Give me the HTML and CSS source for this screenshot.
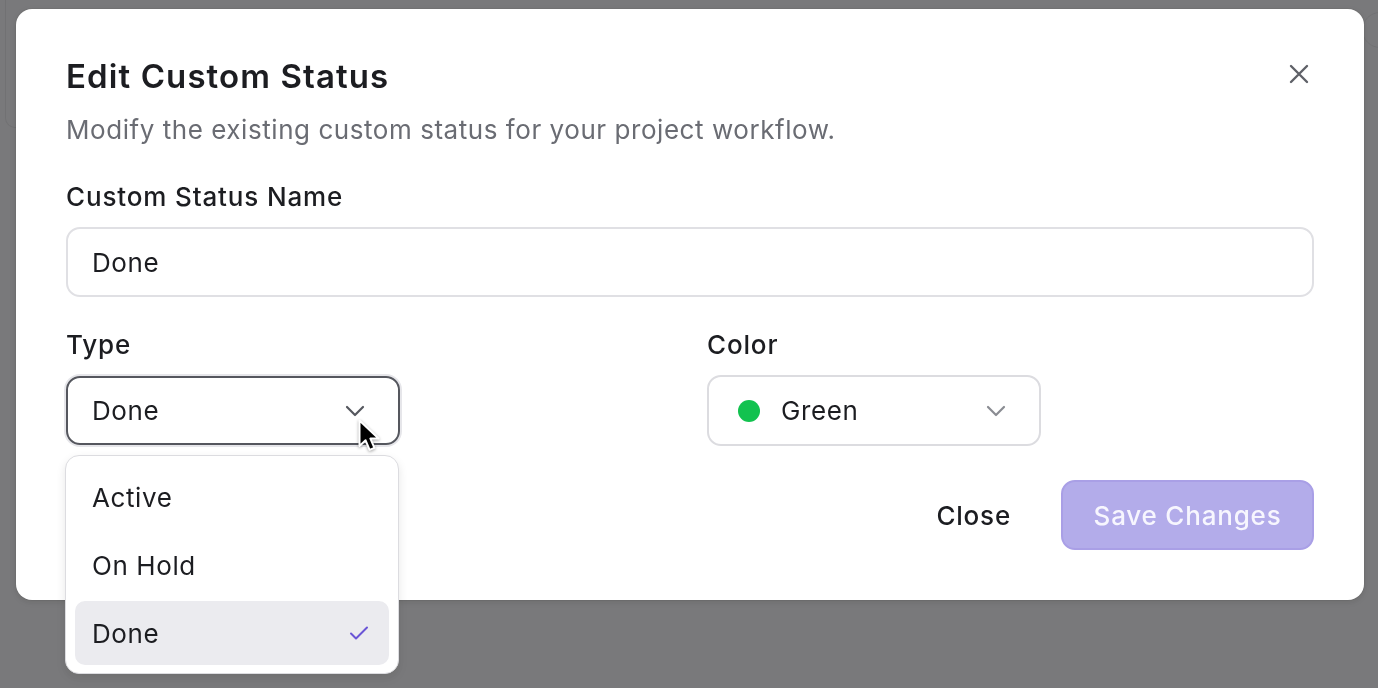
FILE: index.html
```html
<!DOCTYPE html>
<html lang="en">
<head>
<meta charset="utf-8">
<title>Edit Custom Status</title>
<link rel="stylesheet" href="styles.css">
</head>
<body>
  <div class="page">
    <div class="page-rail"></div>
    <div class="page-side"></div>
  </div>

  <div class="backdrop">
    <div class="dialog" role="dialog" aria-labelledby="dlg-title">
      <button class="dialog-close" aria-label="Close">
        <svg width="20" height="20" viewBox="0 0 20 20" fill="none" stroke="currentColor" stroke-width="2.4" stroke-linecap="round">
          <path d="M2 2 L18 18 M18 2 L2 18"/>
        </svg>
      </button>

      <h1 class="dialog-title" id="dlg-title">Edit Custom Status</h1>
      <p class="dialog-desc">Modify the existing custom status for your project workflow.</p>

      <div class="field">
        <label class="field-label">Custom Status Name</label>
        <div class="text-input">Done</div>
      </div>

      <div class="field-row">
        <div class="field">
          <label class="field-label">Type</label>
          <div class="select-wrap">
            <div class="select is-open">
              <span class="select-value">Done</span>
              <svg class="chevron" width="20" height="12" viewBox="0 0 20 12" fill="none" stroke="currentColor" stroke-width="2.2" stroke-linecap="round" stroke-linejoin="round">
                <path d="M2 2 L10 10 L18 2"/>
              </svg>
            </div>
            <ul class="menu">
              <li class="menu-item">Active</li>
              <li class="menu-item">On Hold</li>
              <li class="menu-item is-selected">Done
                <svg class="check" width="20" height="16" viewBox="0 0 20 16" fill="none" stroke="currentColor" stroke-width="2" stroke-linecap="round" stroke-linejoin="round">
                  <path d="M2 8.5 L7 13.5 L18 2.5"/>
                </svg>
              </li>
            </ul>
            <svg class="cursor" width="24" height="38" viewBox="0 0 24 38">
              <path d="M1.5 1.5 L1.5 27 L7.6 21.3 L11.6 30.8 L16.4 28.8 L12.4 19.6 L20.6 19.6 Z" fill="#000" stroke="#fff" stroke-width="2" stroke-linejoin="round"/>
            </svg>
          </div>
        </div>

        <div class="field">
          <label class="field-label">Color</label>
          <div class="select select-color">
            <span class="dot"></span>
            <span class="select-value">Green</span>
            <svg class="chevron chevron-light" width="20" height="12" viewBox="0 0 20 12" fill="none" stroke="currentColor" stroke-width="2.2" stroke-linecap="round" stroke-linejoin="round">
              <path d="M2 2 L10 10 L18 2"/>
            </svg>
          </div>
        </div>
      </div>

      <div class="dialog-footer">
        <button class="btn btn-ghost">Close</button>
        <button class="btn btn-primary" disabled>Save Changes</button>
      </div>
    </div>
  </div>
</body>
</html>
```

FILE: styles.css
```css
* {
  box-sizing: border-box;
}

html, body {
  margin: 0;
  height: 100%;
}

body {
  font-family: Inter, "Noto Sans", "Liberation Sans", sans-serif;
  color: #1c1d21;
  background: #f4f4f6;
  letter-spacing: 0.6px;
  overflow: hidden;
}

/* faint app chrome behind the modal */
.page {
  position: fixed;
  inset: 0;
}

.page-rail {
  position: absolute;
  left: 5px;
  top: 0;
  width: 20px;
  height: 128px;
  border-left: 1px solid #d4d4d8;
  border-bottom: 1px solid #d4d4d8;
  border-bottom-left-radius: 10px;
}

.page-side {
  position: absolute;
  right: -20px;
  top: 12px;
  width: 36px;
  height: 36px;
  border: 1px solid #d4d4d8;
  border-radius: 50%;
}

.backdrop {
  position: fixed;
  inset: 0;
  background: rgba(78, 78, 80, 0.74);
  padding: 9px 14px 0 16px;
}

.dialog {
  position: relative;
  background: #fff;
  border-radius: 16px;
  padding: 49px 50px 50px 50px;
  box-shadow: 0 0 0 1px rgba(0, 0, 0, 0.04), 0 2px 6px rgba(0, 0, 0, 0.12);
}

.dialog-close {
  position: absolute;
  top: 55px;
  right: 55px;
  width: 20px;
  height: 20px;
  padding: 0;
  border: 0;
  background: none;
  color: #5f6168;
  display: flex;
}

.dialog-title {
  margin: 0;
  font-size: 33px;
  line-height: 36px;
  font-weight: 600;
  color: #1c1d21;
  letter-spacing: 1.1px;
}

.dialog-desc {
  margin: 20px 0 0;
  font-size: 26px;
  line-height: 32px;
  color: #6a6c73;
  letter-spacing: 0.55px;
}

.field {
  display: flex;
  flex-direction: column;
}

.dialog-desc + .field {
  margin-top: 35px;
}

.field-label {
  font-size: 26px;
  line-height: 32px;
  font-weight: 500;
  color: #1c1d21;
  margin-bottom: 14px;
  letter-spacing: 0.85px;
}

.text-input {
  height: 70px;
  border: 2px solid #e0e0e4;
  border-radius: 14px;
  padding: 0 24px;
  display: flex;
  align-items: center;
  font-size: 26px;
  color: #1c1d21;
}

.field-row {
  margin-top: 32px;
  display: grid;
  grid-template-columns: 1fr 1fr;
  column-gap: 34px;
}

.field-row .field-label {
  margin-bottom: 15px;
}

.select-wrap {
  position: relative;
  width: 334px;
}

.select {
  height: 69px;
  width: 334px;
  border: 2px solid #dcdce0;
  border-radius: 14px;
  padding: 0 24px;
  display: flex;
  align-items: center;
  font-size: 26px;
  color: #1c1d21;
}

.select.is-open {
  border-color: #55575e;
  box-shadow: 0 0 0 2px #e6e6ea;
}

.select-value {
  flex: 1;
}

.chevron {
  color: #55575e;
  margin-right: 9px;
}

.chevron-light {
  color: #8a8c92;
}

.select-color {
  margin-top: -1px;
  height: 71px;
}

.dot {
  width: 22px;
  height: 22px;
  border-radius: 50%;
  background: #12c24f;
  margin-left: 5px;
  margin-right: 21px;
}

.menu {
  position: absolute;
  top: calc(100% + 10px);
  left: -1px;
  width: 334px;
  margin: 0;
  padding: 9px 9px 8px 9px;
  list-style: none;
  background: #fff;
  border: 1px solid #dcdce0;
  border-radius: 14px;
  box-shadow: 0 4px 10px rgba(0, 0, 0, 0.10);
  display: flex;
  flex-direction: column;
  gap: 4px;
  z-index: 2;
}

.menu-item {
  height: 64px;
  padding: 0 20px 0 17px;
  border-radius: 10px;
  display: flex;
  align-items: center;
  justify-content: space-between;
  font-size: 26px;
  color: #1c1d21;
}

.menu-item.is-selected {
  background: #ebebef;
}

.check {
  color: #6a55d6;
}

.cursor {
  position: absolute;
  left: 292px;
  top: 43px;
  z-index: 3;
  filter: drop-shadow(0 1px 1.5px rgba(0, 0, 0, 0.35));
}

.dialog-footer {
  margin-top: 34px;
  display: flex;
  justify-content: flex-end;
  align-items: center;
  gap: 26px;
}

.btn {
  font-family: inherit;
  font-size: 26px;
  letter-spacing: 0.8px;
  height: 70px;
  border-radius: 14px;
  cursor: pointer;
}

.btn-ghost {
  background: none;
  border: 0;
  padding: 0 24px;
  color: #1c1d21;
  font-weight: 500;
}

.btn-primary {
  width: 253px;
  background: #b3acea;
  border: 2px solid #a99fe6;
  color: #f7f6fe;
  font-weight: 500;
  padding: 0;
}
```
